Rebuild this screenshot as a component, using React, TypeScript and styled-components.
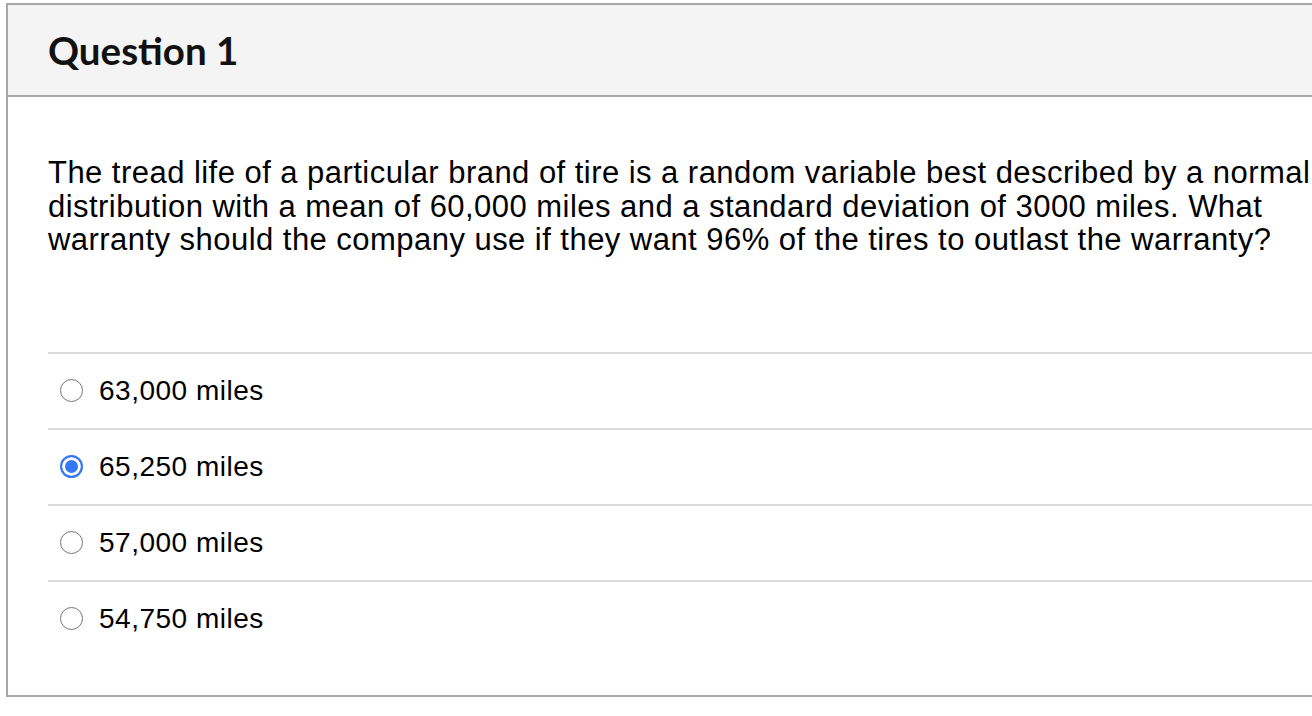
import React from 'react';
import styled, { createGlobalStyle } from 'styled-components';

const GlobalStyle = createGlobalStyle`
  html, body {
    margin: 0;
    padding: 0;
    background: #fff;
    overflow: hidden;
  }
`;

const Page = styled.div`
  width: 1312px;
  height: 716px;
  overflow: hidden;
  padding: 3px 0 0 6px;
  box-sizing: border-box;
`;

const Card = styled.section`
  width: 1412px;
  border: 2px solid #a8a8a8;
  box-sizing: content-box;
`;

const Header = styled.header`
  display: flex;
  align-items: center;
  justify-content: space-between;
  height: 90px;
  padding: 0 40px;
  background: #f4f4f4;
  border-bottom: 2px solid #a8a8a8;
`;

const Title = styled.h2`
  margin: 0;
  font-family: Lato, 'Open Sans', sans-serif;
  font-weight: 700;
  font-size: 38.5px;
  color: #111;
`;

const Points = styled.span`
  font-family: Lato, 'Open Sans', sans-serif;
  font-size: 26px;
  color: #444;
  width: 70px;
`;

const Body = styled.div`
  padding: 59px 0 39px 40px;
`;

const QuestionText = styled.p`
  margin: 0;
  width: 1285px;
  font-family: 'Liberation Sans', Arial, sans-serif;
  font-size: 31px;
  letter-spacing: 0.46px;
  line-height: 33.5px;
  color: #000;
`;

const Answers = styled.ul`
  list-style: none;
  margin: 95px 0 0;
  padding: 0;
`;

const Answer = styled.li`
  display: flex;
  align-items: center;
  gap: 16px;
  height: 74px;
  padding-left: 12px;
  border-top: 2px solid #dcdcdc;
  font-family: 'Liberation Sans', Arial, sans-serif;
  font-size: 28px;
  letter-spacing: 0.5px;
  color: #000;
`;

const Radio = styled.span<{ $checked?: boolean }>`
  width: 23px;
  height: 23px;
  border-radius: 50%;
  box-sizing: border-box;
  flex: none;
  background: ${p => (p.$checked ? '#3478f6' : '#fff')};
  border: ${p => (p.$checked ? '2px solid #3478f6' : '1.5px solid #767676')};
  box-shadow: ${p => (p.$checked ? 'inset 0 0 0 3px #fff' : 'none')};
`;

const answers = [
  { label: '63,000 miles', checked: false },
  { label: '65,250 miles', checked: true },
  { label: '57,000 miles', checked: false },
  { label: '54,750 miles', checked: false },
];

export default function App() {
  return (
    <>
      <GlobalStyle />
      <Page>
        <Card>
          <Header>
            <Title>Question 1</Title>
            <Points>1 pts</Points>
          </Header>
          <Body>
            <QuestionText>
              The tread life of a particular brand of tire is a random variable best described by a normal
              distribution with a mean of 60,000 miles and a standard deviation of 3000 miles. What
              warranty should the company use if they want 96% of the tires to outlast the warranty?
            </QuestionText>
            <Answers>
              {answers.map(a => (
                <Answer key={a.label}>
                  <Radio $checked={a.checked} />
                  {a.label}
                </Answer>
              ))}
            </Answers>
          </Body>
        </Card>
      </Page>
    </>
  );
}
